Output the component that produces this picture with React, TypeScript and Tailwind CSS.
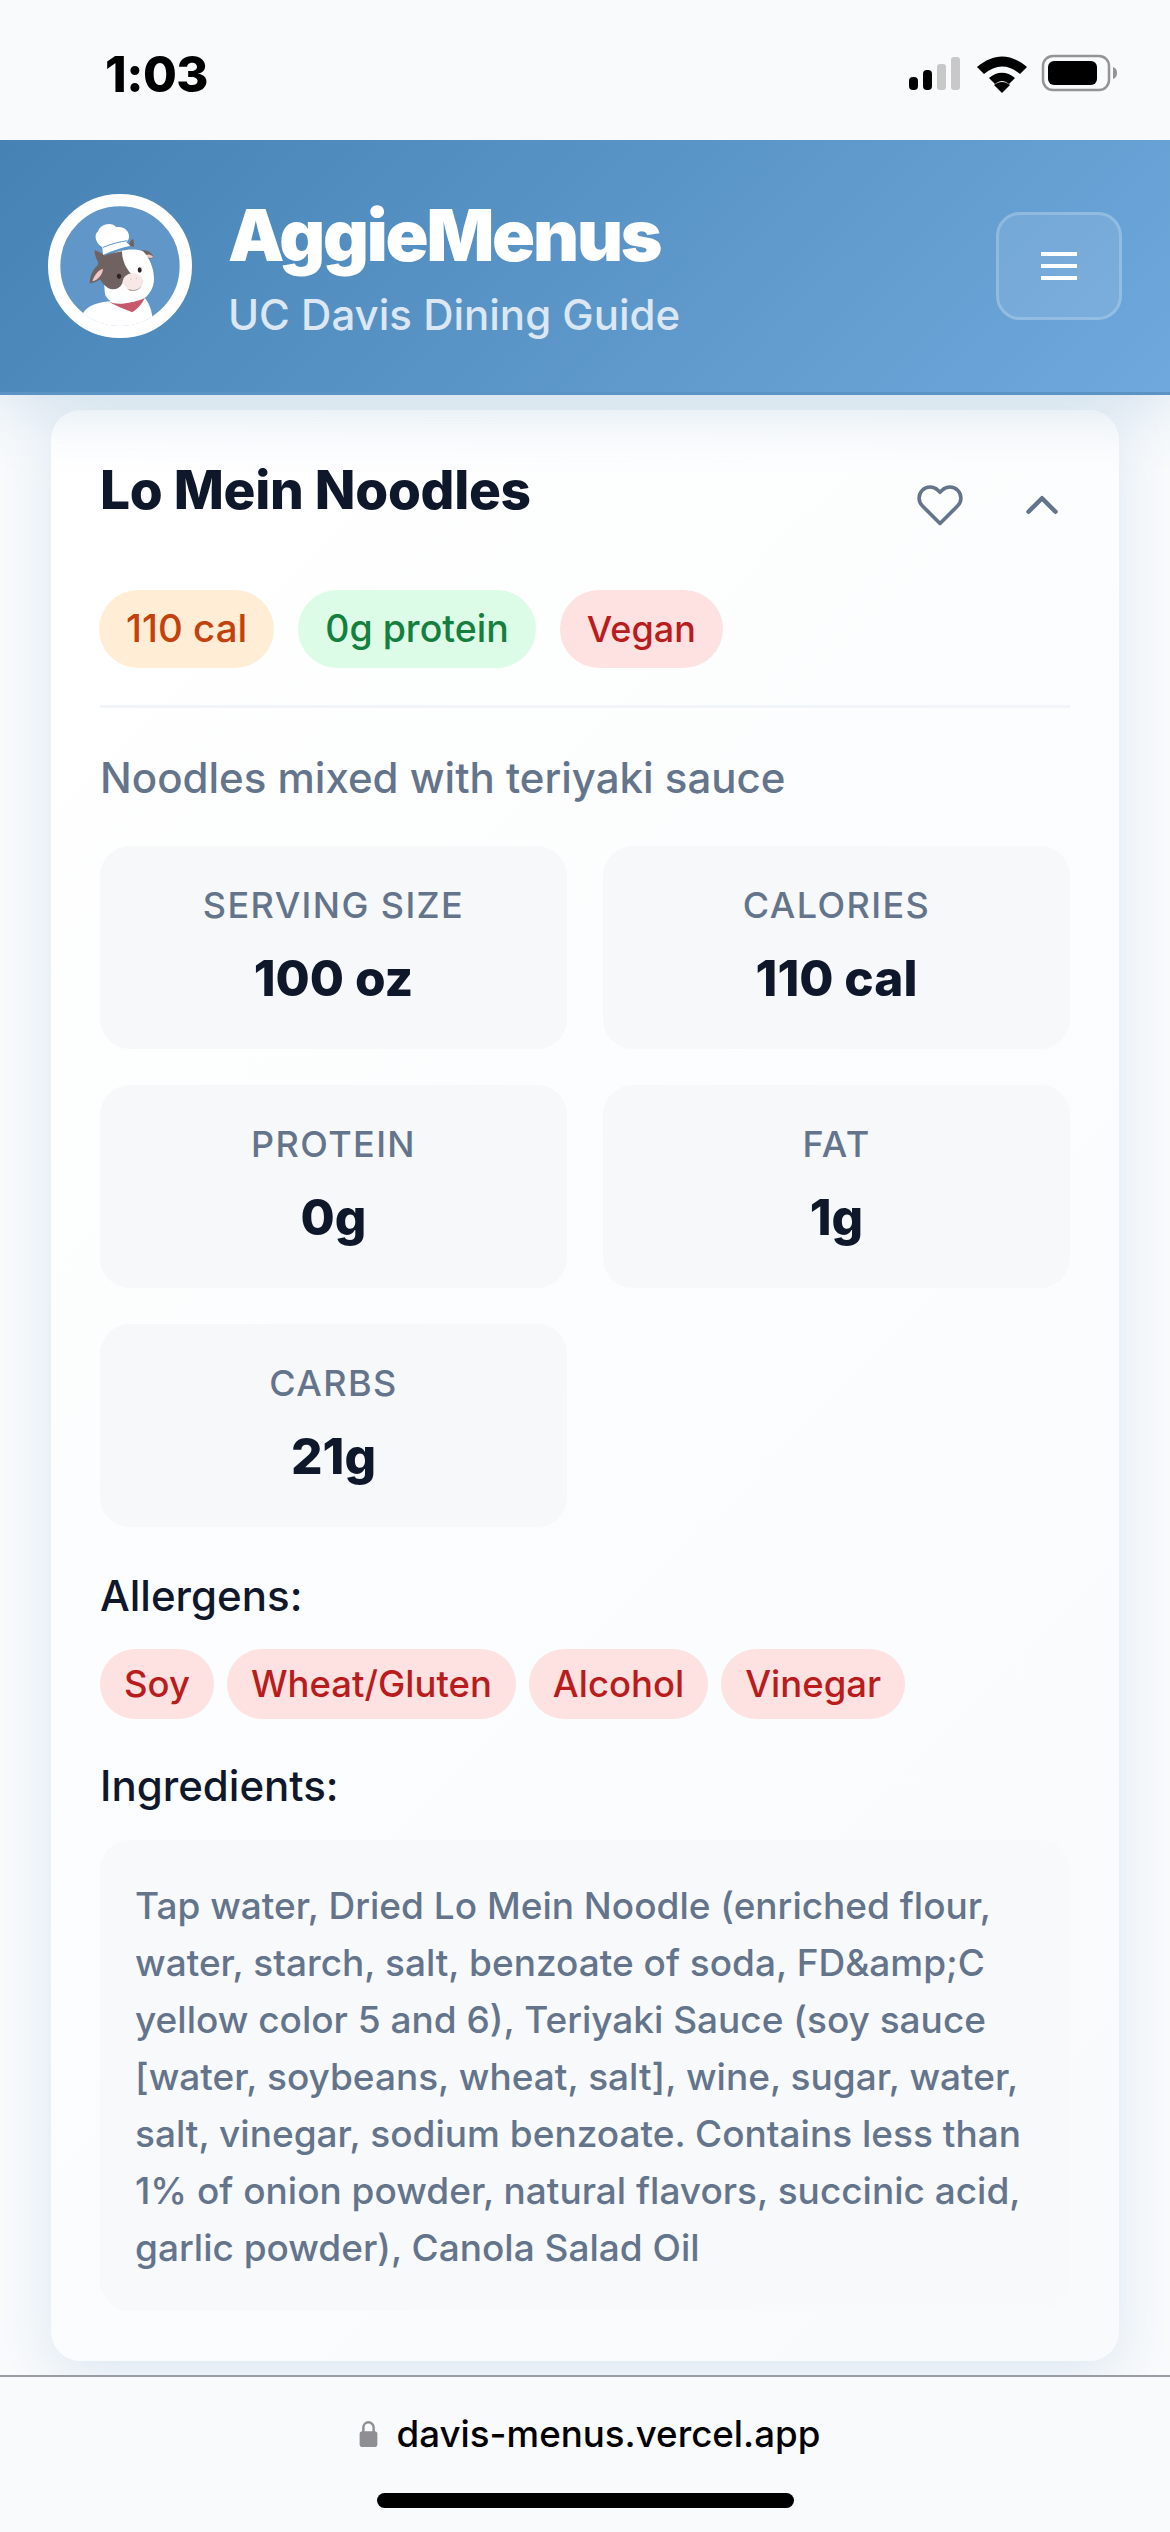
import React from "react";

function Cow() {
  return (
    <svg viewBox="0 0 432 432" className="w-[144px] h-[144px] shrink-0">
      <defs>
        <clipPath id="inner"><circle cx="216" cy="216" r="180" /></clipPath>
      </defs>
      <circle cx="216" cy="216" r="197.5" fill="#6196c8" stroke="#fff" strokeWidth="37" />
      <g clipPath="url(#inner)">
        <path d="M105 358C118 335 150 325 185 322L288 308C302 325 310 345 314 372L320 432L100 432Z" fill="#fff" />
        <path d="M180 322C205 335 250 330 292 308C285 325 270 345 252 355C230 345 200 335 180 322Z" fill="#c65a6c" />
      </g>
      <path d="M243 155C245 145 250 135 255 135C258 142 258 150 258 158Z" fill="#6f6260" />
      <path d="M280 170C298 165 310 175 317 190C305 197 292 195 280 190Z" fill="#6f6260" />
      <path d="M292 184C302 179 310 183 316 189C308 194 298 192 292 184Z" fill="#eec7c6" />
      <path d="M140 168C150 172 160 178 170 183L150 205C143 190 140 180 140 168Z" fill="#6f6260" />
      <path d="M170 290C170 265 155 230 175 190C200 170 255 160 285 172C305 190 318 225 318 255C318 285 300 305 290 312C265 325 220 330 190 322C178 315 170 305 170 290Z" fill="#fff" />
      <path d="M160 188C180 180 200 176 222 172C222 195 232 222 250 240C235 245 226 258 222 270C214 285 195 290 180 282C165 272 155 258 150 240C145 220 150 200 160 188Z" fill="#6f6260" />
      <path d="M158 208C140 218 125 240 125 268C140 266 160 258 172 240Z" fill="#6f6260" />
      <path d="M133 262C138 245 150 228 165 224C165 240 150 258 133 262Z" fill="#eec7c6" />
      <ellipse cx="213" cy="247" rx="6.5" ry="8" fill="#2d2323" />
      <ellipse cx="275" cy="228" rx="6" ry="8" fill="#2d2323" />
      <path d="M237 283C255 292 275 285 280 272C282 282 265 295 245 290Z" fill="#b9a59e" />
      <ellipse cx="255" cy="262" rx="31" ry="24" fill="#f7e7e7" />
      <circle cx="248" cy="255" r="2" fill="#d8bcbc" />
      <circle cx="265" cy="253" r="2" fill="#d8bcbc" />
      <path d="M165 183L163 160C145 150 135 125 150 112C155 92 190 80 205 100C225 95 245 110 243 130C242 140 235 145 235 145L247 155C225 160 190 170 165 183Z" fill="#fff" />
      <path d="M165 160C190 150 215 143 238 140" fill="none" stroke="#6196c8" strokeWidth="3" />
    </svg>
  );
}

function StatusIcons() {
  return (
    <svg viewBox="0 0 210 36" className="w-[210px] h-[36px] overflow-visible">
      <rect x="0" y="19" width="9" height="13" rx="4" fill="#000" />
      <rect x="14" y="12" width="9" height="20" rx="4" fill="#000" />
      <rect x="28" y="6" width="9" height="26" rx="3" fill="#c8c8c8" />
      <rect x="42" y="-1" width="9" height="33" rx="3" fill="#c8c8c8" />
      <path d="M68 9C85 -5 101 -5 118 9L111 16C99 6 87 6 75 16Z" fill="#000" />
      <path d="M80 20C88 13 98 13 106 20L100 26C95 22 91 22 86 26Z" fill="#000" />
      <path d="M93 35L85 27C90 23 96 23 101 27Z" fill="#000" />
      <rect x="134" y="-2" width="66" height="34" rx="10" fill="none" stroke="#949494" strokeWidth="2.5" />
      <rect x="139" y="3" width="49" height="24" rx="6" fill="#000" />
      <path d="M204 9C207 10 208 12 208 15C208 18 207 20 204 21Z" fill="#949494" />
    </svg>
  );
}

function Stat({ label, value }: { label: string; value: string }) {
  return (
    <div className="h-[203px] rounded-[30px] bg-[#f6f8fa] flex flex-col items-center pt-[36px]">
      <div className="text-[36px] leading-[46px] tracking-[1.4px] font-medium text-[#64748b] uppercase">{label}</div>
      <div className="text-[49.5px] leading-[60px] mt-[20px] font-extrabold text-[#0f172a]">{value}</div>
    </div>
  );
}

function Pill({ text, cls }: { text: string; cls: string }) {
  return <span className={`rounded-full font-medium ${cls}`}>{text}</span>;
}

export default function App() {
  const chip = "h-[78px] px-[27px] flex items-center";
  const allergen = "h-[70px] px-[24px] flex items-center text-[36.5px] bg-[#fee2e2] text-[#b91c1c]";
  return (
    <div className="relative w-[1170px] h-[2532px] overflow-hidden bg-[#f8fafc] flex flex-col font-['Inter',sans-serif]">
      <div className="relative z-20 h-[140px] bg-[#f9fafc] flex items-start justify-between pl-[105px] pr-[51px] pt-[46px] shrink-0">
        <div className="text-[49px] leading-[58px] font-extrabold text-black tracking-[-0.5px]">1:03</div>
        <div className="pt-[12px]"><StatusIcons /></div>
      </div>

      <header className="relative z-10 h-[255px] shrink-0 bg-[linear-gradient(135deg,#4682b4,#6fa8dc)] border-b-[3px] border-[#5a93c4] shadow-[0_12px_60px_rgba(70,130,180,0.22)] flex items-center justify-between pl-[48px] pr-[48px]">
        <div className="flex items-center gap-[36px]">
          <Cow />
          <div className="flex flex-col pt-[3px]">
            <div className="text-[71px] leading-[80px] font-black tracking-[-2.2px] text-white">AggieMenus</div>
            <div className="text-[42px] leading-[50px] font-medium text-[#dbe7f3] mt-[15px]">UC Davis Dining Guide</div>
          </div>
        </div>
        <button className="w-[126px] h-[108px] rounded-[24px] bg-white/10 border-[3px] border-white/20 flex flex-col items-center justify-center gap-[8px]">
          <span className="block w-[36px] h-[4px] bg-white" />
          <span className="block w-[36px] h-[4px] bg-white" />
          <span className="block w-[36px] h-[4px] bg-white" />
        </button>
      </header>

      <main className="flex-1 min-h-0 px-[51px] pt-[15px]">
        <section className="h-[1951px] rounded-[30px] bg-[linear-gradient(135deg,#ffffff,#f8fafc)] shadow-[0_12px_50px_rgba(70,130,180,0.15)] px-[49px] pt-[48px]">
          <div className="flex items-start justify-between">
            <h2 className="text-[53.2px] leading-[64px] font-extrabold text-[#0f172a] tracking-[-0.3px]">Lo Mein Noodles</h2>
            <div className="flex items-center gap-[51px] pr-[1px] pt-[20px]">
              <svg viewBox="0 0 24 24" className="w-[48px] h-[48px]" fill="none" stroke="#64748b" strokeWidth="1.8" strokeLinecap="round" strokeLinejoin="round">
                <path d="M20.84 4.61a5.5 5.5 0 0 0-7.78 0L12 5.67l-1.06-1.06a5.5 5.5 0 0 0-7.78 7.78l1.06 1.06L12 21.23l7.78-7.78 1.06-1.06a5.5 5.5 0 0 0 0-7.78z" />
              </svg>
              <svg viewBox="0 0 24 24" className="w-[54px] h-[54px]" fill="none" stroke="#64748b" strokeWidth="2" strokeLinecap="round" strokeLinejoin="round">
                <path d="M18 15l-6-6-6 6" />
              </svg>
            </div>
          </div>

          <div className="flex gap-[24px] mt-[58px] -ml-px">
            <Pill text="110 cal" cls={`${chip} text-[38.5px] bg-[#ffedd5] text-[#c2410c]`} />
            <Pill text="0g protein" cls={`${chip} text-[37.5px] bg-[#dcfce7] text-[#15803d]`} />
            <Pill text="Vegan" cls={`${chip} text-[36px] bg-[#fee2e2] text-[#b91c1c]`} />
          </div>

          <div className="h-[3px] bg-[#f1f5f9] mt-[37px]" />

          <p className="text-[42px] leading-[52px] font-medium text-[#64748b] mt-[44px]">Noodles mixed with teriyaki sauce</p>

          <div className="grid grid-cols-2 gap-[36px] mt-[42px]">
            <Stat label="Serving Size" value="100 oz" />
            <Stat label="Calories" value="110 cal" />
            <Stat label="Protein" value="0g" />
            <Stat label="Fat" value="1g" />
            <Stat label="Carbs" value="21g" />
          </div>

          <h3 className="text-[42px] leading-[50px] font-medium text-[#0f172a] mt-[44px]">Allergens:</h3>
          <div className="flex gap-[13px] mt-[28px]">
            {["Soy", "Wheat/Gluten", "Alcohol", "Vinegar"].map((a) => (
              <Pill key={a} text={a} cls={allergen} />
            ))}
          </div>
          <h3 className="text-[42px] leading-[50px] font-medium text-[#0f172a] mt-[42px]">Ingredients:</h3>
          <div className="rounded-[30px] bg-[#f7f9fb] mt-[29px] pl-[35px] pr-[30px] pt-[37px] pb-[35px] text-[37px] leading-[57px] font-medium text-[#64748b]">
            Tap water, Dried Lo Mein Noodle (enriched flour, water, starch, salt, benzoate of soda, FD&amp;amp;C yellow color 5 and 6), Teriyaki Sauce (soy sauce [water, soybeans, wheat, salt], wine, sugar, water, salt, vinegar, sodium benzoate. Contains less than 1% of onion powder, natural flavors, succinic acid, garlic powder), Canola Salad Oil
          </div>
        </section>
      </main>

      <footer className="relative z-10 h-[157px] shrink-0 bg-[#f8fafc] border-t-2 border-[#9a9ca4] flex flex-col items-center">
        <div className="flex items-center gap-[19px] mt-[34px] h-[46px] ml-[9px]">
          <svg viewBox="0 0 20 30" className="w-[19px] h-[28px]">
            <path d="M4.5 13V8a5.5 5.5 0 0 1 11 0v5" fill="none" stroke="#8e8e93" strokeWidth="2.6" />
            <rect x="0.5" y="12" width="19" height="17" rx="3" fill="#8e8e93" />
          </svg>
          <span className="text-[36.7px] leading-[46px] font-medium text-black">davis-menus.vercel.app</span>
        </div>
        <div className="w-[417px] h-[15px] rounded-full bg-black mt-[36px]" />
      </footer>
    </div>
  );
}
